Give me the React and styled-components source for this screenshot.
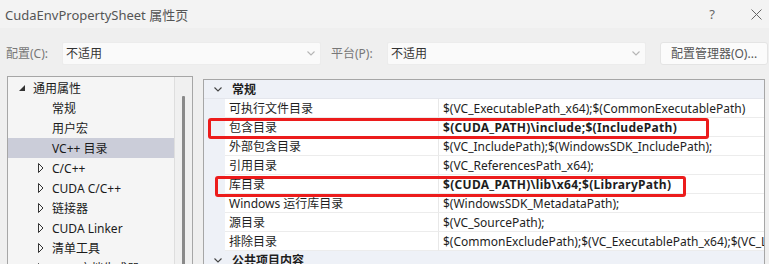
import React from "react";
import styled, { createGlobalStyle } from "styled-components";

const GlobalStyle = createGlobalStyle`
  html, body {
    margin: 0;
    padding: 0;
    background: #efefef;
  }
  body {
    font-family: "Noto Sans", "Noto Sans CJK SC", sans-serif;
    font-size: 12px;
    color: #1e1e1e;
  }
`;

const treeItems = [
  { label: "常规", level: 1 },
  { label: "用户宏", level: 1 },
  { label: "VC++ 目录", level: 1, selected: true },
  { label: "C/C++", level: 1, expandable: true },
  { label: "CUDA C/C++", level: 1, expandable: true },
  { label: "链接器", level: 1, expandable: true },
  { label: "CUDA Linker", level: 1, expandable: true },
  { label: "清单工具", level: 1, expandable: true },
  { label: "XML 文档生成器", level: 1, expandable: true },
];

const props = [
  { name: "可执行文件目录", value: "$(VC_ExecutablePath_x64);$(CommonExecutablePath)" },
  { name: "包含目录", value: "$(CUDA_PATH)\\include;$(IncludePath)", bold: true },
  { name: "外部包含目录", value: "$(VC_IncludePath);$(WindowsSDK_IncludePath);" },
  { name: "引用目录", value: "$(VC_ReferencesPath_x64);" },
  { name: "库目录", value: "$(CUDA_PATH)\\lib\\x64;$(LibraryPath)", bold: true },
  { name: "Windows 运行库目录", value: "$(WindowsSDK_MetadataPath);" },
  { name: "源目录", value: "$(VC_SourcePath);" },
  { name: "排除目录", value: "$(CommonExcludePath);$(VC_ExecutablePath_x64);$(VC_LibraryPath_x64)" },
];

function Chevron({ color = "#444" }) {
  return (
    <svg width="8" height="5" viewBox="0 0 8 5">
      <polyline points="0.5,0.5 4,4 7.5,0.5" fill="none" stroke={color} strokeWidth="1.1" />
    </svg>
  );
}

export default function App() {
  return (
    <Window>
      <GlobalStyle />
      <TitleBar>
        <Title>CudaEnvPropertySheet 属性页</Title>
        <TitleButtons>
          <Help>?</Help>
          <svg width="11" height="11" viewBox="0 0 11 11">
            <line x1="0.5" y1="0.5" x2="10.5" y2="10.5" stroke="#666" strokeWidth="1" />
            <line x1="10.5" y1="0.5" x2="0.5" y2="10.5" stroke="#666" strokeWidth="1" />
          </svg>
        </TitleButtons>
      </TitleBar>

      <ConfigRow>
        <FieldLabel>配置(C):</FieldLabel>
        <Select>
          <span>不适用</span>
          <Chevron color="#b5b5b5" />
        </Select>
        <FieldLabel>平台(P):</FieldLabel>
        <Select>
          <span>不适用</span>
          <Chevron color="#b5b5b5" />
        </Select>
        <ManagerButton>配置管理器(O)...</ManagerButton>
      </ConfigRow>

      <Panels>
        <TreePanel>
          <TreeList>
            <TreeRow $indent={11}>
              <Caret>
                <svg width="6" height="6" viewBox="0 0 6 6">
                  <polygon points="6,0 6,6 0,6" fill="#333" />
                </svg>
              </Caret>
              通用属性
            </TreeRow>
            {treeItems.map((it) => (
              <TreeRow key={it.label} $indent={30} $selected={it.selected}>
                <Caret>
                  {it.expandable && (
                    <svg width="6" height="10" viewBox="0 0 6 10">
                      <polygon points="0.5,0.5 5,5 0.5,9.5" fill="none" stroke="#333" strokeWidth="1" />
                    </svg>
                  )}
                </Caret>
                {it.label}
              </TreeRow>
            ))}
          </TreeList>
          <ScrollTrack>
            <Thumb />
          </ScrollTrack>
        </TreePanel>

        <Grid>
          <Category>
            <Chevron />
            <span>常规</span>
          </Category>
          {props.map((p) => (
            <PropRow key={p.name}>
              <Gutter />
              <PropName>{p.name}</PropName>
              <PropValue $bold={p.bold}>{p.value}</PropValue>
            </PropRow>
          ))}
          <Category>
            <Chevron />
            <span>公共项目内容</span>
          </Category>
          <Highlight $left={4} $top={38} $width={501} />
          <Highlight $left={11} $top={96} $width={471} />
        </Grid>
      </Panels>
    </Window>
  );
}

const Window = styled.div`
  width: 769px;
  height: 264px;
  overflow: hidden;
  background: #efefef;
`;

const TitleBar = styled.div`
  height: 28px;
  background: #f3f3f3;
  display: flex;
  align-items: center;
  justify-content: space-between;
  padding: 0 7px 0 5px;
`;

const Title = styled.div`
  font-size: 13px;
  color: #555;
`;

const TitleButtons = styled.div`
  display: flex;
  align-items: center;
  gap: 36px;
`;

const Help = styled.span`
  font-size: 13px;
  color: #666;
`;

const ConfigRow = styled.div`
  display: flex;
  align-items: center;
  height: 24px;
  margin-top: 13px;
  padding-left: 6px;
`;

const FieldLabel = styled.span`
  color: #777;
  width: 56px;
  font-size: 12px;
`;

const Select = styled.div`
  width: 259px;
  height: 23px;
  box-sizing: border-box;
  background: #fafafa;
  border: 1px solid #ececec;
  border-radius: 2px;
  display: flex;
  align-items: center;
  justify-content: space-between;
  padding: 0 5px 0 3px;
  color: #333;
  margin-right: 10px;
`;

const ManagerButton = styled.div`
  margin-left: 4px;
  width: 108px;
  height: 23px;
  box-sizing: border-box;
  background: #fbfbfb;
  border: 1px solid #e4e4e4;
  border-radius: 3px;
  display: flex;
  align-items: center;
  justify-content: center;
  color: #555;
`;

const Panels = styled.div`
  display: flex;
  gap: 10px;
  margin-top: 11px;
  padding-left: 7px;
`;

const TreePanel = styled.div`
  width: 186px;
  height: 200px;
  box-sizing: border-box;
  border: 1px solid #a6a6a6;
  border-bottom: none;
  background: #f5f5f5;
  display: flex;
`;

const TreeList = styled.div`
  width: 166px;
  padding-top: 1px;
  border-right: 1px solid #dedede;
`;

const TreeRow = styled.div`
  height: 20px;
  display: flex;
  align-items: center;
  padding-left: ${(p) => p.$indent}px;
  background: ${(p) => (p.$selected ? "#cbcdd9" : "transparent")};
  color: #1b1b1b;
  white-space: nowrap;
`;

const Caret = styled.span`
  width: 14px;
  display: inline-flex;
  align-items: center;
`;

const ScrollTrack = styled.div`
  flex: 1;
  background: #f0f0f0;
  padding-top: 19px;
  display: flex;
  justify-content: center;
`;

const Thumb = styled.div`
  width: 3px;
  height: 200px;
  background: #8a8a8a;
  border-radius: 1px;
`;

const Grid = styled.div`
  position: relative;
  width: 562px;
  margin-top: 3px;
  box-sizing: border-box;
  border: 1px solid #a6a6a6;
  border-bottom: none;
  background: #eef1f7;
`;

const Category = styled.div`
  height: 19px;
  display: flex;
  align-items: center;
  gap: 10px;
  padding-left: 10px;
  font-weight: bold;
  color: #1e1e1e;
  border-bottom: 1px solid #e4e6ec;
  box-sizing: border-box;
`;

const PropRow = styled.div`
  display: grid;
  grid-template-columns: 21px 214px 1fr;
  height: 19px;
`;

const Gutter = styled.div`
  background: #eef1f7;
`;

const PropName = styled.div`
  background: #fff;
  display: flex;
  align-items: center;
  padding-left: 4px;
  border-right: 1px solid #e8e8e8;
  border-bottom: 1px solid #ececec;
  white-space: nowrap;
`;

const PropValue = styled.div`
  background: #fff;
  display: flex;
  align-items: center;
  padding-left: 4px;
  border-bottom: 1px solid #ececec;
  white-space: nowrap;
  overflow: hidden;
  font-weight: ${(p) => (p.$bold ? "bold" : "normal")};
  letter-spacing: ${(p) => (p.$bold ? "0.3px" : "0")};
`;

const Highlight = styled.div`
  position: absolute;
  left: ${(p) => p.$left}px;
  top: ${(p) => p.$top}px;
  width: ${(p) => p.$width}px;
  height: 21px;
  box-sizing: border-box;
  border: 3px solid #ec1c1c;
  border-radius: 3px;
  pointer-events: none;
`;
